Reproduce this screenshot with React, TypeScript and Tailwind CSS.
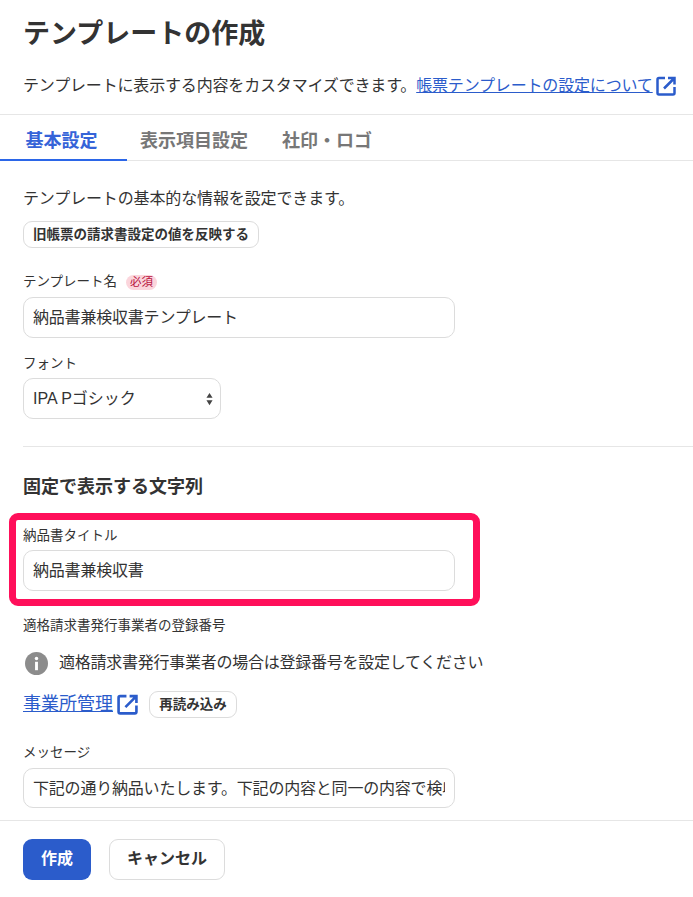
import React from "react";

const FONT = "font-['Liberation_Sans','Noto_Sans_CJK_JP',sans-serif]";

const ExternalIcon: React.FC<{ className?: string }> = ({ className }) => (
  <svg viewBox="0 0 20 20" fill="none" stroke="#2b5ccb" strokeWidth="2.500" className={`shrink-0 ${className ?? ""}`}>
    <path d="M9 2H3a1.500 1.500 0 0 0-1.500 1.500V17A1.500 1.500 0 0 0 3 18.500h14A1.500 1.500 0 0 0 18.500 17v-6" />
    <path d="M12 2h6.500v6.500M18 2.500L8 12.500" />
  </svg>
);

const TextField: React.FC<{ value: string; className?: string }> = ({ value, className }) => (
  <input
    readOnly
    value={value}
    className={`block h-[41px] w-[432px] rounded-[10px] border border-[#dcdcdc] bg-white px-[9px] pb-[3px] text-[16px] tracking-[-0.2px] text-[#333] outline-none ${className ?? ""}`}
  />
);

const SmallButton: React.FC<{ label: string; className?: string }> = ({ label, className }) => (
  <button className={`h-[27px] rounded-[9px] border border-[#dcdcdc] bg-white text-[13.500px] font-bold leading-[25px] text-[#333] ${className ?? ""}`}>
    {label}
  </button>
);

const App: React.FC = () => {
  const tabs = ["基本設定", "表示項目設定", "社印・ロゴ"];
  return (
    <div className={`${FONT} flex h-[897px] w-[693px] flex-col overflow-hidden bg-white text-[#333]`}>
      <div className="border-b border-[#e6e6e6] pb-[16px] pl-[23px] pt-[16px]">
        <h1 className="text-[27px] font-bold leading-[36px]">テンプレートの作成</h1>
        <p className="mt-[22px] flex items-center whitespace-nowrap text-[16px] leading-[24px] tracking-[-0.17px]">
          テンプレートに表示する内容をカスタマイズできます。
          <a className="text-[#2b5ccb] underline">帳票テンプレートの設定について</a>
          <ExternalIcon className="ml-[3px] h-[20px] w-[20px]" />
        </p>
      </div>

      <div className="flex h-[46px] border-b border-[#e6e6e6]">
        {tabs.map((title, i) => (
          <button
            key={i}
            className={`-mb-px h-[46px] text-[18px] font-bold leading-[53px] ${
              i === 0
                ? "w-[127px] border-b-2 border-[#2b66e8] pr-[4px] text-[#3563d8]"
                : i === 1
                  ? "ml-[13px] text-[#777]"
                  : "ml-[34px] text-[#777]"
            }`}
          >
            {title}
          </button>
        ))}
      </div>

      <div className="relative flex-1 overflow-hidden pl-[23px] pt-[26px]">
        <p className="text-[16px] leading-[24px] tracking-[-0.13px]">テンプレートの基本的な情報を設定できます。</p>
        <SmallButton label="旧帳票の請求書設定の値を反映する" className="mt-[10px] w-[236px]" />

        <div className="mt-[24px] flex items-center text-[13.500px] leading-[20px]">
          テンプレート名
          <span className="ml-[9px] rounded-full bg-[#fbd5dc] px-[4px] text-[11.500px] leading-[15px] text-[#b8123f]">必須</span>
        </div>
        <TextField value="納品書兼検収書テンプレート" className="mt-[5px]" />

        <div className="mt-[16px] text-[13.500px] leading-[20px]">フォント</div>
        <div className="relative mt-[4px] w-[198px]">
          <select className="block h-[41px] w-full appearance-none rounded-[10px] border border-[#dcdcdc] bg-white px-[9px] text-[16px] text-[#333] outline-none">
            <option>IPA Pゴシック</option>
          </select>
          <svg viewBox="0 0 8 14" className="absolute right-[8px] top-[14px] h-[14px] w-[7px]" fill="#444">
            <path d="M4 0l3.500 5.500h-7zM4 14L.5 8.500h7z" />
          </svg>
        </div>

        <div className="mt-[27px] h-px bg-[#e6e6e6]" />

        <h2 className="mt-[28px] text-[18px] font-bold leading-[24px]">固定で表示する文字列</h2>

        <div className="mt-[27px] text-[13.500px] leading-[20px]">納品書タイトル</div>
        <TextField value="納品書兼検収書" className="mt-[4px]" />

        <div className="mt-[25px] text-[13.500px] leading-[20px]">適格請求書発行事業者の登録番号</div>
        <div className="mt-[15px] flex h-[24px] items-center text-[16px] tracking-[-0.25px]">
          <svg viewBox="0 0 24 24" className="ml-[2px] h-[23px] w-[23px]">
            <circle cx="12" cy="12" r="12" fill="#8c8c8c" />
            <circle cx="12" cy="6.800" r="1.800" fill="#fff" />
            <rect x="10.500" y="10.200" width="3" height="8.800" fill="#fff" />
          </svg>
          <span className="ml-[11px]">適格請求書発行事業者の場合は登録番号を設定してください</span>
        </div>
        <div className="mt-[16px] flex h-[27px] items-center">
          <a className="-mt-[2px] text-[18px] leading-[24px] text-[#2b5ccb] underline">事業所管理</a>
          <ExternalIcon className="ml-[4px] h-[21px] w-[21px]" />
          <SmallButton label="再読み込み" className="ml-[11px] w-[88px]" />
        </div>

        <div className="mt-[25px] text-[13.500px] leading-[20px]">メッセージ</div>
        <TextField value="下記の通り納品いたします。下記の内容と同一の内容で検収いたしました。" className="mt-[5px] !h-[40px]" />

        {/* 赤枠のハイライト */}
        <div className="pointer-events-none absolute left-[9px] top-[352px] h-[93px] w-[471px] rounded-[9px] border-[7px] border-[#ff0f5a]" />
      </div>

      <div className="flex h-[77px] gap-[18px] border-t border-[#e6e6e6] px-[23px] pt-[18px]">
        <button className="h-[41px] w-[68px] rounded-[9px] bg-[#2b5ccb] pb-[2px] text-[16px] font-bold text-white">作成</button>
        <button className="h-[41px] w-[116px] rounded-[9px] border border-[#dcdcdc] bg-white pb-[2px] text-[16px] font-bold text-[#333]">キャンセル</button>
      </div>
    </div>
  );
};

export default App;
